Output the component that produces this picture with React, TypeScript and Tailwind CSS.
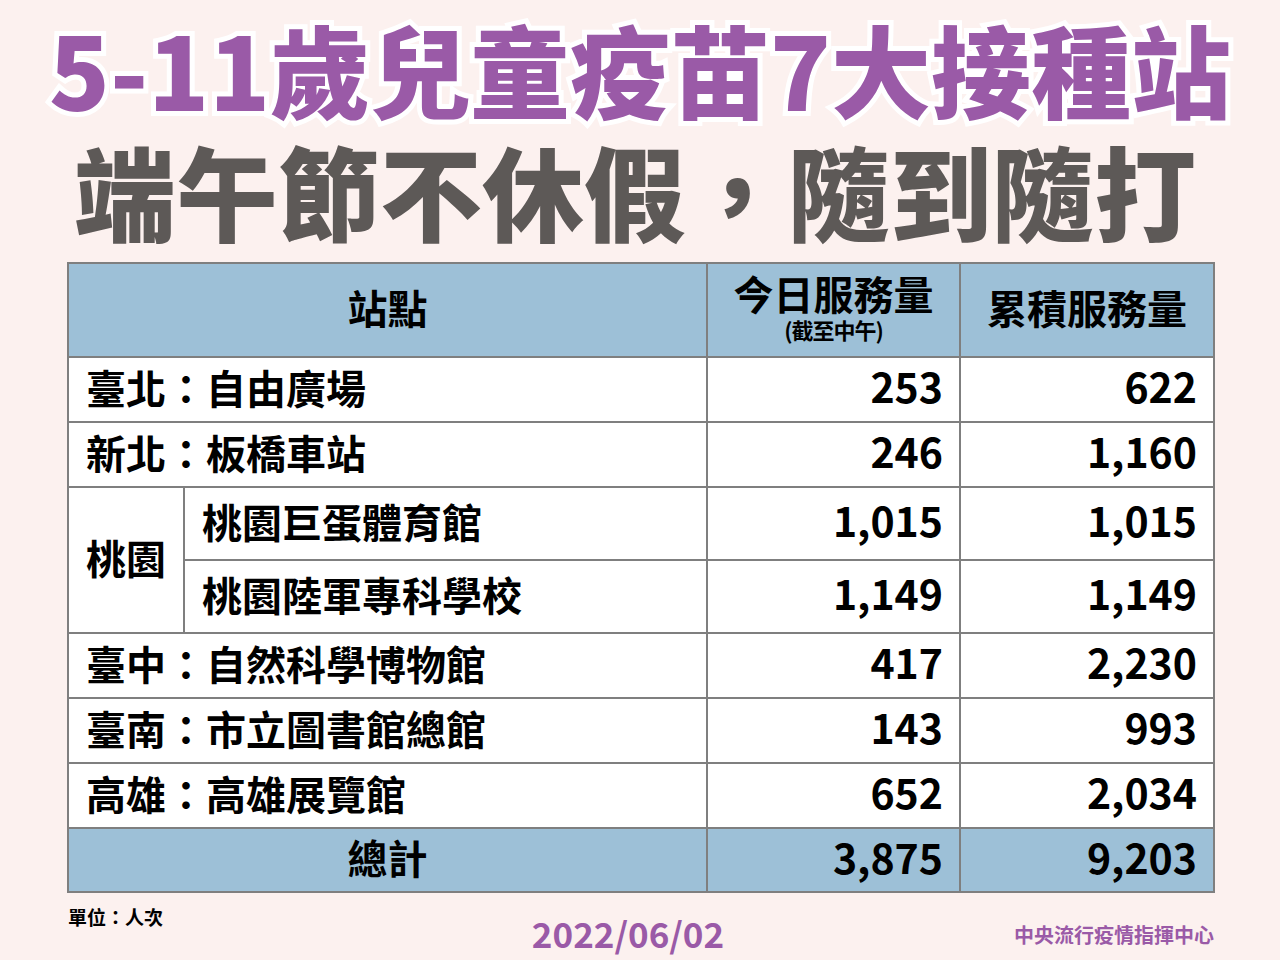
import React from "react";

const font = { fontFamily: '"Noto Sans CJK TC", "Noto Sans", sans-serif' };

type Row = { name: string; today: string; total: string };

const rowsTop: Row[] = [
  { name: "臺北：自由廣場", today: "253", total: "622" },
  { name: "新北：板橋車站", today: "246", total: "1,160" },
];
const rowsBottom: Row[] = [
  { name: "臺中：自然科學博物館", today: "417", total: "2,230" },
  { name: "臺南：市立圖書館總館", today: "143", total: "993" },
  { name: "高雄：高雄展覽館", today: "652", total: "2,034" },
];

const cell = "border-2 border-[#7f7f7f]";
const num = `${cell} text-right pr-[16px] pb-[8px] text-[41px] font-bold text-black leading-none`;
const name = `${cell} text-left pl-[17px] pb-[6px] text-[40px] font-bold text-black leading-none`;

export default function App() {
  return (
    <div
      className="w-[1280px] h-[960px] bg-[#fcf1ef] overflow-hidden flex flex-col items-center"
      style={font}
    >
      <div className="mt-[6px] h-[124px] flex items-center text-[100px] font-black text-[#9a5aa7] leading-none [-webkit-text-stroke:10px_white] [paint-order:stroke_fill] whitespace-nowrap">
        5-11歲兒童疫苗7大接種站
      </div>
      <div className="h-[132px] pb-[12px] mr-[10px] flex items-center text-[102px] font-black text-[#5d5957] leading-none whitespace-nowrap">
        端午節不休假，隨到隨打
      </div>
      <table className="border-collapse w-[1146px] table-fixed ml-[2px]">
        <colgroup>
          <col className="w-[116px]" />
          <col className="w-[523px]" />
          <col className="w-[253px]" />
          <col className="w-[254px]" />
        </colgroup>
        <tbody>
          <tr className="h-[94px] bg-[#9dc0d7]">
            <td colSpan={2} className={`${cell} text-center text-[40px] font-bold text-black pb-[6px]`}>
              站點
            </td>
            <td className={`${cell} text-center text-black`}>
              <div className="text-[40px] font-bold leading-[46px] -mt-[8px]">今日服務量</div>
              <div className="text-[22px] font-bold leading-[26px] tracking-[-1px]">(截至中午)</div>
            </td>
            <td className={`${cell} text-center text-[40px] font-bold text-black pb-[6px]`}>
              累積服務量
            </td>
          </tr>
          {rowsTop.map((r) => (
            <tr key={r.name} className="h-[65px] bg-white">
              <td colSpan={2} className={name}>{r.name}</td>
              <td className={num}>{r.today}</td>
              <td className={num}>{r.total}</td>
            </tr>
          ))}
          <tr className="h-[73px] bg-white">
            <td rowSpan={2} className={name}>桃園</td>
            <td className={name}>桃園巨蛋體育館</td>
            <td className={num}>1,015</td>
            <td className={num}>1,015</td>
          </tr>
          <tr className="h-[73px] bg-white">
            <td className={name}>桃園陸軍專科學校</td>
            <td className={num}>1,149</td>
            <td className={num}>1,149</td>
          </tr>
          {rowsBottom.map((r) => (
            <tr key={r.name} className="h-[65px] bg-white">
              <td colSpan={2} className={name}>{r.name}</td>
              <td className={num}>{r.today}</td>
              <td className={num}>{r.total}</td>
            </tr>
          ))}
          <tr className="h-[64px] bg-[#9dc0d7]">
            <td colSpan={2} className={`${cell} text-center text-[40px] font-bold text-black pb-[6px] leading-none`}>
              總計
            </td>
            <td className={num}>3,875</td>
            <td className={num}>9,203</td>
          </tr>
        </tbody>
      </table>
      <div className="w-[1146px] ml-[2px] flex items-start justify-between mt-[6px]">
        <div className="w-[280px] text-[19px] font-bold text-black leading-none mt-[8px]">單位：人次</div>
        <div className="text-[35px] font-bold text-[#9a5aa7] leading-none mt-[16px]">2022/06/02</div>
        <div className="w-[306px] text-right text-[20px] font-bold text-[#9a5aa7] leading-none mt-[26px]">
          中央流行疫情指揮中心
        </div>
      </div>
    </div>
  );
}
